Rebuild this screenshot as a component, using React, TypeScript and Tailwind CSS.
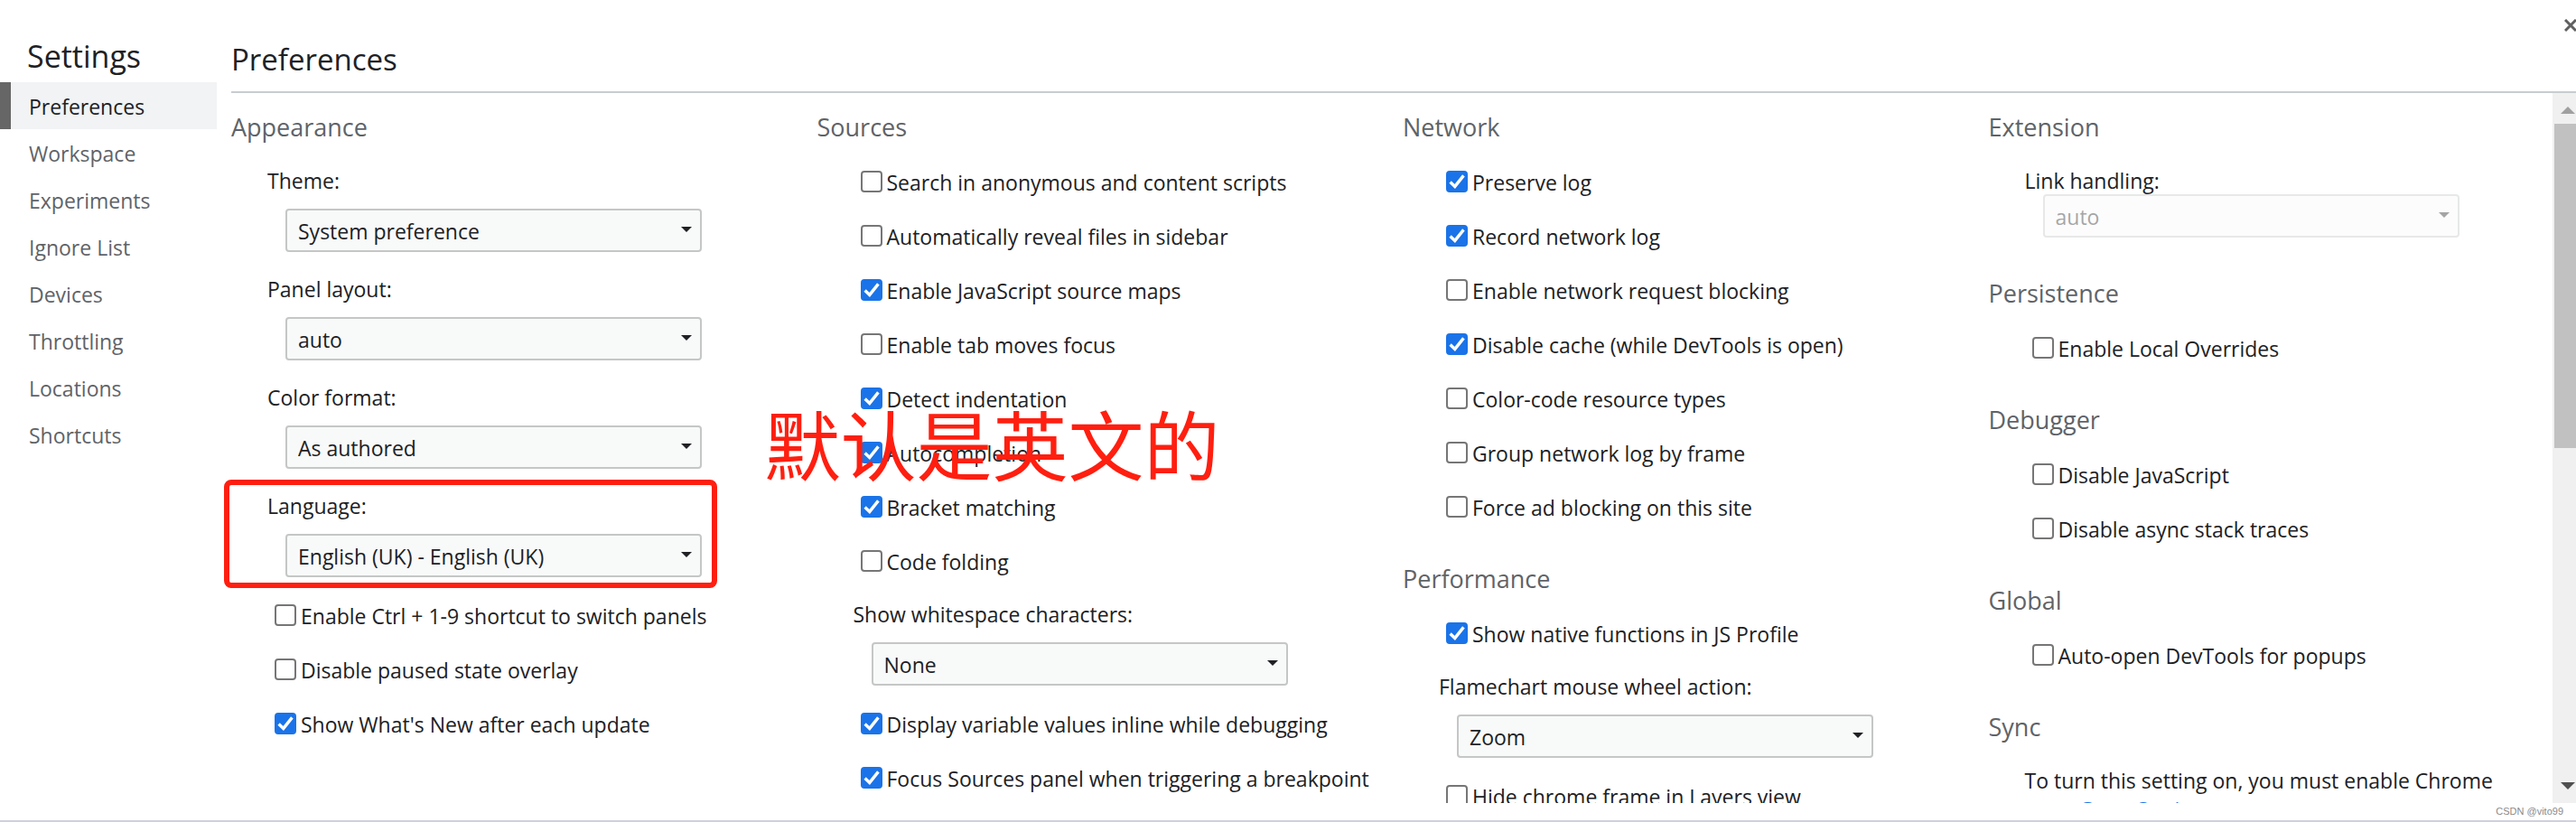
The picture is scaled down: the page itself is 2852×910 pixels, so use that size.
import React, { useId, useState } from "react";

const navItems = [
  "Preferences",
  "Workspace",
  "Experiments",
  "Ignore List",
  "Devices",
  "Throttling",
  "Locations",
  "Shortcuts",
];

const Section = ({
  title,
  children,
}: {
  title: string;
  children: React.ReactNode;
}) => {
  return (
    <section className="mb-3">
      <h3 className="h-[68px] pt-[18px] text-[27px] leading-10 text-[#5f6368]">
        {title}
      </h3>
      {children}
    </section>
  );
};

const CheckRow = ({
  label,
  checked = false,
}: {
  label: string;
  checked?: boolean;
}) => {
  return (
    <label className="flex h-[60px] items-center gap-[5px] pl-12 whitespace-nowrap">
      <span className="relative h-6 w-6 shrink-0">
        <input
          type="checkbox"
          defaultChecked={checked}
          className="peer block h-6 w-6 appearance-none rounded-[4px] border-2 border-[#767676] bg-white checked:border-[#1a73e8] checked:bg-[#1a73e8]"
        />
        <svg
          viewBox="0 0 24 24"
          className="pointer-events-none absolute inset-0 hidden h-6 w-6 peer-checked:block"
          fill="none"
          stroke="#fff"
          strokeWidth="3.4"
        >
          <path d="M4.6 12.4 L9.8 17.4 L19.4 5.4" />
        </svg>
      </span>
      <span className="pt-0.5">{label}</span>
    </label>
  );
};

const SelectField = ({
  label,
  value,
  disabled = false,
  highlighted = false,
}: {
  label: string;
  value: string;
  disabled?: boolean;
  highlighted?: boolean;
}) => {
  const id = useId();

  return (
    <div className="relative pb-3 pl-10">
      {highlighted && (
        <div className="pointer-events-none absolute top-0 bottom-0 -left-2 w-[546px] rounded-lg border-6 border-[#ff1f10]" />
      )}
      <label
        htmlFor={id}
        className={
          disabled
            ? "block h-11 pt-[13px] leading-8"
            : "block h-[60px] pt-[13px] leading-8"
        }
      >
        {label}
      </label>
      <div
        className={
          disabled
            ? "relative ml-5 w-[461px] opacity-40"
            : "relative ml-5 w-[461px]"
        }
      >
        <select
          id={id}
          disabled={disabled}
          defaultValue={value}
          className="block h-12 w-full appearance-none rounded-[4px] border-2 border-[#c5c6c6] bg-[#f8f9f9] pt-0.5 pl-3 text-[#202124]"
        >
          <option>{value}</option>
        </select>
        <svg
          viewBox="0 0 12 6"
          className="pointer-events-none absolute top-5 right-[11px] h-1.5 w-3"
          fill="#202124"
        >
          <path d="M0 0 H12 L6 6 Z" />
        </svg>
      </div>
    </div>
  );
};

const ScrollBar = () => {
  return (
    <div className="flex w-[26px] shrink-0 flex-col bg-[#f0f0f0] pl-0.5">
      <div className="flex h-[34px] shrink-0 items-center justify-center pt-1">
        <svg viewBox="0 0 16 8" className="ml-1.5 h-2 w-4" fill="#a0a0a0">
          <path d="M0 8 L8 0 L16 8 Z" />
        </svg>
      </div>
      <div className="min-h-0 flex-1">
        <div className="h-1/2 bg-[#c1c1c1]" />
      </div>
      <div className="flex h-[34px] shrink-0 items-center justify-center pb-1">
        <svg viewBox="0 0 16 8" className="ml-1.5 h-2 w-4" fill="#505050">
          <path d="M0 0 L8 8 L16 0 Z" />
        </svg>
      </div>
    </div>
  );
};

const App = () => {
  const [active, setActive] = useState("Preferences");

  return (
    <div className="relative flex h-screen overflow-hidden border-b-2 border-[#d0d0dc] bg-white pb-[19px] font-['Segoe_UI','Open_Sans','Noto_Sans_CJK_SC',sans-serif] text-[23px] leading-8 text-[#202124]">
      <aside className="w-60 shrink-0">
        <h1 className="h-[91px] pt-9 pl-[30px] text-[34px] leading-[52px]">
          Settings
        </h1>
        <nav>
          {navItems.map((item) => (
            <a
              key={item}
              href={`#${item}`}
              onClick={() => setActive(item)}
              className={
                item === active
                  ? "block h-[52px] border-l-12 border-[#666] bg-[#f1f3f4] pl-5 leading-[54px] text-[#202124]"
                  : "block h-[52px] pl-8 leading-[54px] text-[#5f6368]"
              }
            >
              {item}
            </a>
          ))}
        </nav>
      </aside>

      <main className="flex min-w-0 flex-1 flex-col">
        <header className="ml-4 flex h-[103px] shrink-0 justify-between border-b-2 border-[#c8ccd0]">
          <h2 className="pt-10 text-[33px] leading-[52px]">Preferences</h2>
          <button aria-label="Close" className="mt-[21px] -mr-0.5 h-3.5 w-[15px]">
            <svg
              viewBox="0 0 14 14"
              className="h-3.5 w-3.5"
              stroke="#606060"
              strokeWidth="3"
            >
              <path d="M1 1 L13 13 M13 1 L1 13" />
            </svg>
          </button>
        </header>

        <div className="flex min-h-0 flex-1 overflow-hidden pl-4">
          <div className="grid min-w-0 flex-1 grid-cols-4 gap-x-6">
            <div>
              <Section title="Appearance">
                <SelectField label="Theme:" value="System preference" />
                <SelectField label="Panel layout:" value="auto" />
                <SelectField label="Color format:" value="As authored" />
                <SelectField
                  label="Language:"
                  value="English (UK) - English (UK)"
                  highlighted
                />
                <CheckRow label="Enable Ctrl + 1-9 shortcut to switch panels" />
                <CheckRow label="Disable paused state overlay" />
                <CheckRow label="Show What's New after each update" checked />
              </Section>
            </div>

            <div className="relative">
              <Section title="Sources">
                <CheckRow label="Search in anonymous and content scripts" />
                <CheckRow label="Automatically reveal files in sidebar" />
                <CheckRow label="Enable JavaScript source maps" checked />
                <CheckRow label="Enable tab moves focus" />
                <CheckRow label="Detect indentation" checked />
                <CheckRow label="Autocompletion" checked />
                <CheckRow label="Bracket matching" checked />
                <CheckRow label="Code folding" />
                <SelectField label="Show whitespace characters:" value="None" />
                <CheckRow
                  label="Display variable values inline while debugging"
                  checked
                />
                <CheckRow
                  label="Focus Sources panel when triggering a breakpoint"
                  checked
                />
              </Section>
              <p className="pointer-events-none absolute top-[337px] -left-[58px] font-['Noto_Sans_CJK_SC',sans-serif] text-[84px] leading-[100px] whitespace-nowrap text-[#ff1f10]">
                默认是英文的
              </p>
            </div>

            <div>
              <Section title="Network">
                <CheckRow label="Preserve log" checked />
                <CheckRow label="Record network log" checked />
                <CheckRow label="Enable network request blocking" />
                <CheckRow
                  label="Disable cache (while DevTools is open)"
                  checked
                />
                <CheckRow label="Color-code resource types" />
                <CheckRow label="Group network log by frame" />
                <CheckRow label="Force ad blocking on this site" />
              </Section>
              <Section title="Performance">
                <CheckRow label="Show native functions in JS Profile" checked />
                <SelectField
                  label="Flamechart mouse wheel action:"
                  value="Zoom"
                />
                <CheckRow label="Hide chrome frame in Layers view" />
              </Section>
            </div>

            <div>
              <Section title="Extension">
                <SelectField label="Link handling:" value="auto" disabled />
              </Section>
              <Section title="Persistence">
                <CheckRow label="Enable Local Overrides" />
              </Section>
              <Section title="Debugger">
                <CheckRow label="Disable JavaScript" />
                <CheckRow label="Disable async stack traces" />
              </Section>
              <Section title="Global">
                <CheckRow label="Auto-open DevTools for popups" />
              </Section>
              <Section title="Sync">
                <p className="pt-[13px] pr-12 pl-10">
                  To turn this setting on, you must enable Chrome sync.{" "}
                  <a href="#sync" className="text-[#1a73e8]">
                    Go to Settings
                  </a>
                </p>
              </Section>
            </div>
          </div>
          <ScrollBar />
        </div>
      </main>

      <span className="absolute right-3.5 bottom-0.5 font-['Liberation_Sans',sans-serif] text-[11px] leading-4 text-[#8a8a8a]">
        CSDN @vito99
      </span>
    </div>
  );
};

export default App;
